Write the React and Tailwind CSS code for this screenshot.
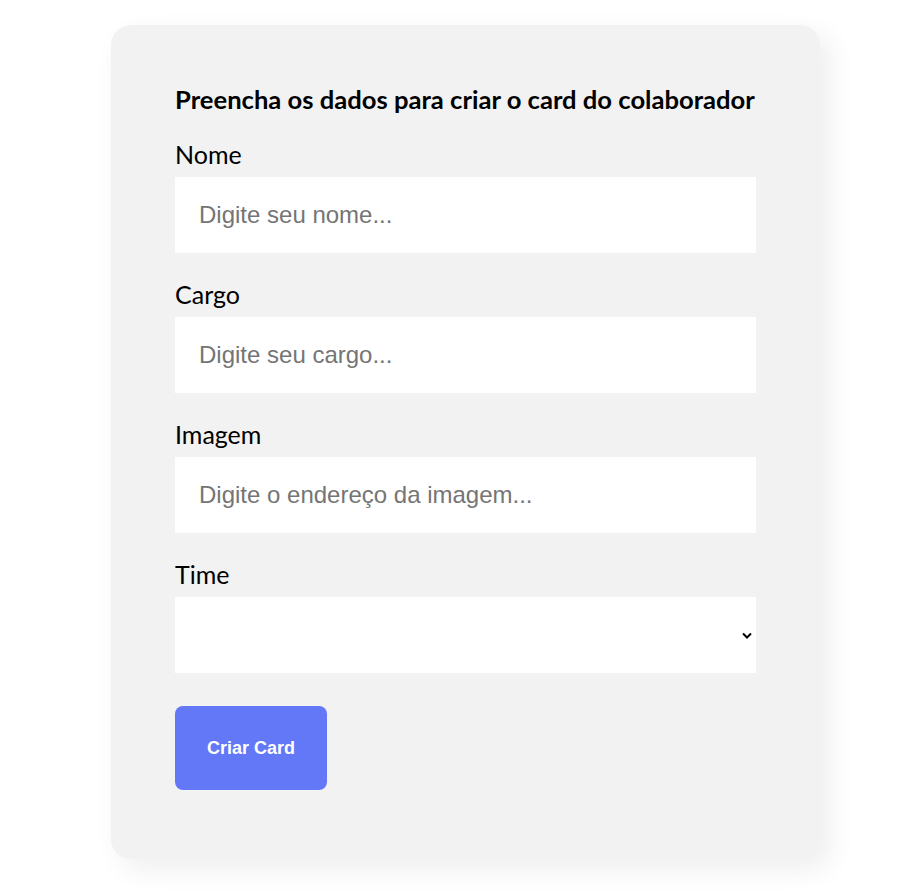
import React, { useState } from 'react';

const fieldClass =
  "block w-full bg-white px-6 py-6 text-[24px] leading-[28px] text-black outline-none font-['Liberation_Sans',Arial,sans-serif] placeholder:text-[#757575]";

const Field = ({ label, placeholder, value, onChange }) => (
  <div className="mb-6">
    <label className="block mb-[6px] text-[25px] leading-[34px]">{label}</label>
    <input
      type="text"
      className={fieldClass}
      placeholder={placeholder}
      value={value}
      onChange={(e) => onChange(e.target.value)}
    />
  </div>
);

const App = () => {
  const [nome, setNome] = useState('');
  const [cargo, setCargo] = useState('');
  const [imagem, setImagem] = useState('');
  const [time, setTime] = useState('');

  return (
    <div className="min-h-screen bg-white pt-[25px] font-['Lato','Noto_Sans',sans-serif] text-black">
      <form
        onSubmit={(e) => e.preventDefault()}
        className="ml-[111px] w-[709px] rounded-[20px] bg-[#f2f2f2] px-16 pt-[58px] pb-[69px] shadow-[10px_10px_28px_rgba(0,0,0,0.07)]"
      >
        <h2 className="mb-[22px] text-[25.6px] leading-[32px] font-bold whitespace-nowrap">
          Preencha os dados para criar o card do colaborador
        </h2>

        <Field label="Nome" placeholder="Digite seu nome..." value={nome} onChange={setNome} />
        <Field label="Cargo" placeholder="Digite seu cargo..." value={cargo} onChange={setCargo} />
        <Field label="Imagem" placeholder="Digite o endereço da imagem..." value={imagem} onChange={setImagem} />

        <div className="mb-[33px]">
          <label className="block mb-[6px] text-[25px] leading-[34px]">Time</label>
          <div className="relative">
            <select
              value={time}
              onChange={(e) => setTime(e.target.value)}
              className={fieldClass + ' appearance-none h-[76px]'}
            >
              <option value=""></option>
              <option>Programação</option>
              <option>Front-End</option>
              <option>Data Science</option>
            </select>
            <svg
              className="pointer-events-none absolute right-[4px] top-[35px]"
              width="10"
              height="7"
              viewBox="0 0 10 7"
            >
              <path d="M1 1.5 L5 5.5 L9 1.5" fill="none" stroke="#000" strokeWidth="2" />
            </svg>
          </div>
        </div>

        <button
          type="submit"
          className="rounded-lg bg-[#6278f7] p-8 text-[18px] leading-[20px] font-bold text-white font-['Liberation_Sans',Arial,sans-serif]"
        >
          Criar Card
        </button>
      </form>
    </div>
  );
};

export default App;
